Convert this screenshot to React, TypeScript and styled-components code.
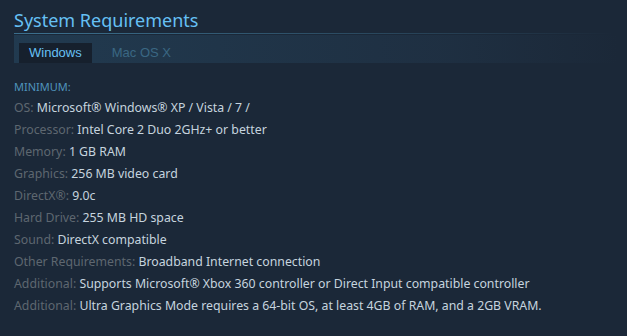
import styled, { createGlobalStyle } from 'styled-components';

const GlobalStyle = createGlobalStyle`
  html, body {
    margin: 0;
    padding: 0;
    background: #1b2838;
  }
`;

const Wrapper = styled.div`
  width: 627px;
  height: 336px;
  box-sizing: border-box;
  padding: 9px 0 0 14px;
  background: #1b2838;
  font-family: "Noto Sans", "Open Sans", sans-serif;
`;

const Title = styled.h2`
  margin: 0;
  font-family: "Noto Sans", sans-serif;
  font-weight: 400;
  font-size: 18px;
  line-height: 23px;
  color: #66c0f4;
`;

const Rule = styled.div`
  height: 1px;
  margin-top: 1px;
  width: 600px;
  background: linear-gradient(to right, #3b6e8c 5%, rgba(59, 110, 140, 0.3) 75%, rgba(59, 110, 140, 0) 100%);
`;

const TabBar = styled.div`
  display: flex;
  gap: 10px;
  margin-top: 1px;
  padding: 8px 0 0 5px;
  height: 20px;
  width: 600px;
  background: linear-gradient(to right, rgba(34, 60, 82, 0.9) 0%, rgba(34, 55, 76, 0.5) 70%, rgba(34, 55, 76, 0) 100%);
`;

const Tab = styled.div<{ $active?: boolean }>`
  padding: 0 10px;
  height: 20px;
  line-height: 20px;
  font-family: "Liberation Sans", Arial, sans-serif;
  font-size: 13px;
  color: ${(p) => (p.$active ? '#67c1f5' : '#3a6783')};
  background: ${(p) => (p.$active ? '#16202d' : 'transparent')};
`;

const Body = styled.div`
  padding-top: 13px;
`;

const Heading = styled.div`
  font-size: 11px;
  line-height: 21px;
  color: #4f94bc;
  text-transform: uppercase;
`;

const Row = styled.div`
  font-size: 12.3px;
  line-height: 22px;
  color: #c6d4df;
  white-space: nowrap;
`;

const Label = styled.span`
  color: #5e6770;
`;

const specs: [string, string][] = [
  ['OS', 'Microsoft® Windows® XP / Vista / 7 /'],
  ['Processor', 'Intel Core 2 Duo 2GHz+ or better'],
  ['Memory', '1 GB RAM'],
  ['Graphics', '256 MB video card'],
  ['DirectX®', '9.0c'],
  ['Hard Drive', '255 MB HD space'],
  ['Sound', 'DirectX compatible'],
  ['Other Requirements', 'Broadband Internet connection'],
  ['Additional', 'Supports Microsoft® Xbox 360 controller or Direct Input compatible controller'],
  ['Additional', 'Ultra Graphics Mode requires a 64-bit OS, at least 4GB of RAM, and a 2GB VRAM.'],
];

export default function App() {
  return (
    <Wrapper>
      <GlobalStyle />
      <Title>System Requirements</Title>
      <Rule />
      <TabBar>
        <Tab $active>Windows</Tab>
        <Tab>Mac OS X</Tab>
      </TabBar>
      <Body>
        <Heading>Minimum:</Heading>
        {specs.map(([label, value], i) => (
          <Row key={label + i}>
            <Label>{label}:</Label> {value}
          </Row>
        ))}
      </Body>
    </Wrapper>
  );
}
